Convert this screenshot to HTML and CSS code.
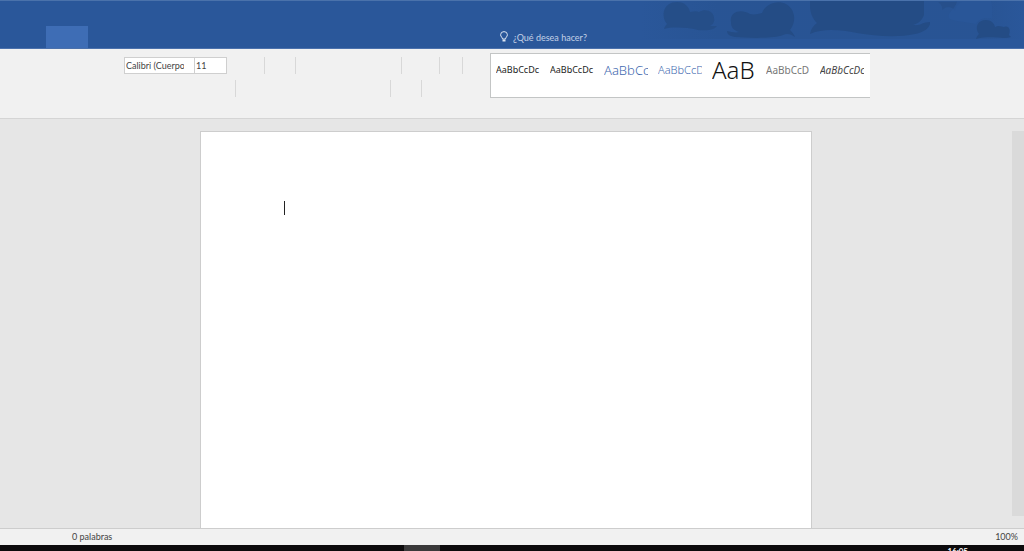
FILE: index.html
```html
<!DOCTYPE html>
<html lang="es">
<head>
    <meta charset="UTF-8">
    <meta name="viewport" content="width=device-width, initial-scale=1.0">
    <title>Documento</title>
    <link rel="stylesheet" href="styles.css">
</head>
<body>
    <header class="titlebar">
        <svg class="clouds" viewBox="0 0 384 48" aria-hidden="true">
            <defs>
                <linearGradient id="haze">
                    <stop offset="0" stop-color="#234b82" stop-opacity="0"/>
                    <stop offset="0.2" stop-color="#234b82" stop-opacity="0.25"/>
                    <stop offset="0.9" stop-color="#234b82" stop-opacity="0.25"/>
                    <stop offset="1" stop-color="#234b82" stop-opacity="0"/>
                </linearGradient>
            </defs>
            <rect width="384" height="38" fill="url(#haze)"/>
            <g fill="#244c85">
                <path opacity="0.8" d="M24 28C25 25 26 24 27 23C20 14 24 1 37 1C45 1 49 6 50 11C54 10 57 10 59 11C65 7 74 10 74 17C75 21 73 23 70 25H77C74 29 67 30 58 29C45 26 32 26 24 28Z"/>
                <path d="M91 21C89 11 101 7 110 13C114 14 118 13 122 12C126 2 138 -1 146 3C155 8 157 20 150 29C152 31 154 33 155 36C151 33 147 32 143 34C132 38 107 37 95 36C89 35 87 33 87 30C91 31 96 32 99 31C93 29 91 26 91 21Z"/>
                <path d="M170 0H284V14C282 20 277 23 273 24C281 25 282 21 290 21C291 27 282 32 275 33C257 37 235 35 217 32C200 29 184 27 170 33C171 28 173 25 177 22C173 18 170 12 170 5Z"/>
                <path opacity="0.6" d="M298 1H322C317 3 316 6 315 10C311 4 306 6 302 9C303 6 301 3 298 1Z"/>
                <path d="M336 38C337 35 338 34 339 33C334 26 338 19 346 19C351 19 354 22 355 26C359 24 362 26 364 26C369 24 371 29 369 34L371 36C362 39 352 34 336 38Z"/>
            </g>
            <path fill="#2a579a" opacity="0.7" d="M317 0H351C353 6 352 13 352 18C348 16 339 17 336 23C326 21 313 20 310 18C305 12 315 10 317 0Z"/>
        </svg>
        <button class="tab-active" type="button" aria-label="Inicio"></button>
        <label class="tell-me">
            <svg class="bulb" viewBox="0 0 8 12" aria-hidden="true">
                <path d="M2.5 8C2.5 6.5 .6 5.6 .6 3.8a3.4 3.2 0 0 1 6.8 0C7.4 5.6 5.5 6.5 5.5 8Z" fill="none" stroke="#dbe4f1"/>
                <path d="M2.5 8.5h3v2h-3z" fill="#dbe4f1"/>
            </svg>
            <input class="tell-me-input" type="text" placeholder="¿Qué desea hacer?" aria-label="¿Qué desea hacer?">
        </label>
    </header>

    <section class="ribbon">
        <div class="tools">
            <div class="tool-row">
                <input class="box font-name" type="text" value="Calibri (Cuerpo)" aria-label="Fuente">
                <input class="box font-size" type="text" value="11" aria-label="Tamaño de fuente">
                <span class="group group-m"></span>
                <span class="group group-s"></span>
                <span class="group group-xl"></span>
                <span class="group group-m"></span>
                <span class="group group-xs"></span>
            </div>
            <div class="tool-row">
                <span class="group group-l"></span>
                <span class="group group-xxl"></span>
                <span class="group group-s"></span>
            </div>
        </div>
        <div class="gallery">
            <button class="style" type="button">AaBbCcDc</button>
            <button class="style" type="button">AaBbCcDc</button>
            <button class="style heading-1" type="button">AaBbCc</button>
            <button class="style heading-2" type="button">AaBbCcD</button>
            <button class="style title" type="button">AaB</button>
            <button class="style subtitle" type="button">AaBbCcD</button>
            <button class="style emphasis" type="button">AaBbCcDc</button>
        </div>
    </section>

    <main class="workspace">
        <div class="page">
            <div class="caret"></div>
        </div>
        <div class="scrollbar"></div>
    </main>

    <footer class="statusbar">
        <span>0 palabras</span>
        <span>100%</span>
    </footer>
    <div class="taskbar">
        <span class="task"></span>
        <span class="clock">16:05</span>
    </div>
</body>
</html>
```
FILE: styles.css
```css
* {
    box-sizing: border-box;
}
body {
    margin: 0;
    height: 100vh;
    display: flex;
    flex-direction: column;
    overflow: hidden;
    background-color: #e6e6e6;
    color: #444;
    font-family: Lato, "Noto Sans", sans-serif;
    font-size: 9px;
}
button, input {
    margin: 0;
    padding: 0;
    border: none;
    border-radius: 0;
    background: none;
    color: inherit;
    font: inherit;
}

/* Title bar */
.titlebar {
    position: relative;
    flex: none;
    display: flex;
    align-items: flex-end;
    height: 49px;
    padding-left: 46px;
    background-color: #2a579a;
    border-top: 1px solid #4a72ab;
    border-bottom: 1px solid #4b71ac;
}
.clouds {
    position: absolute;
    top: 0;
    right: 0;
    width: 384px;
    height: 48px;
}
.tab-active {
    width: 42px;
    height: 22px;
    background-color: #3e6db5;
}
.tell-me {
    position: relative;
    display: flex;
    align-items: center;
    gap: 5px;
    margin-left: 412px;
    padding-bottom: 4px;
}
.bulb {
    width: 8px;
    height: 12px;
}
.tell-me-input {
    width: 100px;
    height: 14px;
}
.tell-me-input::placeholder {
    color: #c3d1e6;
    opacity: 1;
}

/* Ribbon */
.ribbon {
    flex: none;
    display: flex;
    align-items: flex-start;
    height: 70px;
    padding: 4px 0 0 124px;
    background-color: #f1f1f1;
    border-bottom: 1px solid #d5d5d5;
}
.tools {
    flex: none;
    display: grid;
    gap: 6px;
    width: 366px;
    padding-top: 4px;
}
.tool-row {
    display: flex;
    height: 17px;
}
.box {
    height: 17px;
    background-color: #fff;
    border: 1px solid #cfcfcf;
    padding-left: 1px;
}
.font-name {
    width: 70px;
    padding-right: 10px;
    border-right: none;
}
.font-size {
    width: 33px;
}
.group {
    border-right: 1px solid #d8d8d8;
}
.group-xs {
    width: 23px;
}
.group-s {
    width: 31px;
}
.group-m {
    width: 38px;
}
.group-l {
    width: 112px;
}
.group-xl {
    width: 106px;
}
.group-xxl {
    width: 155px;
}
.gallery {
    display: flex;
    align-items: flex-start;
    gap: 10px;
    width: 380px;
    height: 45px;
    padding: 6px 5px;
    background-color: #fff;
    border: 1px solid #c3c5c5;
    border-right: none;
}
.style {
    flex: none;
    width: 44px;
    height: 20px;
    overflow: hidden;
    color: #222;
    font-family: "Noto Sans", sans-serif;
    font-size: 9px;
    line-height: 20px;
    text-align: left;
    white-space: nowrap;
}
.heading-1 {
    color: #3f6ab0;
    font-size: 13px;
    font-weight: 300;
}
.heading-2 {
    color: #3f6ab0;
    font-size: 11px;
    font-weight: 300;
}
.title {
    color: #111;
    font-size: 24px;
    font-weight: 300;
    line-height: 16px;
}
.subtitle {
    color: #777;
    font-size: 10px;
}
.emphasis {
    color: #444;
    font-size: 10px;
    font-style: italic;
}

/* Document */
.workspace {
    flex: 1;
    min-height: 0;
    display: flex;
    padding-top: 12px;
}
.page {
    width: 612px;
    margin: 0 auto;
    padding: 69px 83px;
    background-color: #fff;
    border: 1px solid #cdcdcd;
    border-bottom: none;
}
.caret {
    width: 1px;
    height: 14px;
    background-color: #222;
}
.scrollbar {
    width: 12px;
    margin-bottom: 12px;
    background-color: #dadada;
}

/* Bottom bars */
.statusbar {
    flex: none;
    display: flex;
    justify-content: space-between;
    height: 17px;
    padding: 0 6px 0 72px;
    background-color: #f1f1f1;
    border-top: 1px solid #cdcdcd;
    line-height: 15px;
}
.taskbar {
    flex: none;
    display: flex;
    justify-content: space-between;
    height: 6px;
    padding: 0 56px 0 404px;
    background-color: #0c0a0c;
    overflow: hidden;
}
.task {
    width: 36px;
    background-color: #3a393a;
}
.clock {
    color: #fff;
    font-size: 8px;
    font-weight: bold;
    line-height: 13px;
}
```
